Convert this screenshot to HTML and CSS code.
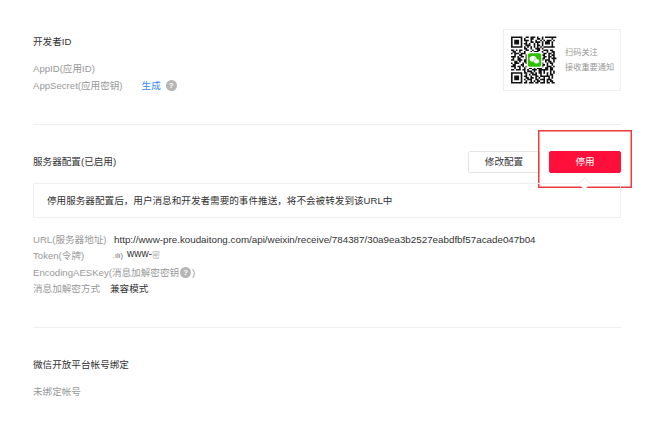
FILE: index.html
```
<!DOCTYPE html>
<html lang="zh-CN">
<head>
<meta charset="utf-8">
<title>开发者配置</title>
<link rel="stylesheet" href="styles.css">
</head>
<body>
<main class="page">
  <section class="section dev">
    <div class="dev-info">
      <h2 class="title">开发者ID</h2>
      <p class="row first"><span class="label">AppID(应用ID)</span></p>
      <p class="row"><span class="label">AppSecret(应用密钥)</span><a class="link" href="#">生成</a><span class="help">?</span></p>
    </div>
    <aside class="qr-card">
      <svg class="qr" viewBox="0 0 29 29" aria-hidden="true">
        <path fill="none" stroke="#111" stroke-width="1" d="M0 .5h7m2 0h2m1 0h3m1 0h1m2 0h1m1 0h7M0 1.5h1m5 0h1m1 0h1m3 0h2m2 0h2m1 0h1m5 0h1M0 2.5h1m1 0h3m1 0h1m1 0h3m1 0h1m2 0h1m2 0h1m1 0h1m1 0h3m1 0h1M0 3.5h1m1 0h3m1 0h1m2 0h1m2 0h2m1 0h3m1 0h1m1 0h3m1 0h1M0 4.5h1m1 0h3m1 0h1m1 0h2m1 0h1m2 0h1m1 0h1m2 0h1m1 0h3m1 0h1M0 5.5h1m5 0h1m2 0h3m2 0h1m1 0h2m1 0h1m5 0h1M0 6.5h7m1 0h1m1 0h1m1 0h1m1 0h1m1 0h1m1 0h1m1 0h7M8 7.5h2m2 0h1m2 0h3m1 0h1M0 8.5h2m1 0h1m1 0h2m2 0h2m2 0h1m2 0h2m2 0h3m1 0h2M1 9.5h2m2 0h1m2 0h1m3 0h1m1 0h3m2 0h1m2 0h1m2 0h2M0 10.5h1m1 0h3m1 0h3m2 0h1m3 0h1m1 0h2m1 0h2m1 0h2m1 0h1M2 11.5h1m2 0h2m2 0h1m1 0h2m5 0h3m2 0h1m1 0h2M0 12.5h3m1 0h1m1 0h2m1 0h1m8 0h1m1 0h2m1 0h2m1 0h1M1 13.5h1m2 0h2m3 0h1m8 0h3m2 0h1m1 0h3M0 14.5h2m2 0h3m1 0h2m8 0h2m1 0h3m2 0h1M2 15.5h2m1 0h1m2 0h2m8 0h1m2 0h1m1 0h2m1 0h1M0 16.5h1m1 0h3m2 0h1m1 0h2m6 0h3m2 0h1m1 0h2M1 17.5h2m3 0h2m2 0h1m1 0h3m2 0h1m1 0h2m1 0h1m2 0h1M0 18.5h3m1 0h2m1 0h1m1 0h3m1 0h1m2 0h2m1 0h1m2 0h3m1 0h1M2 19.5h1m2 0h1m2 0h1m2 0h2m1 0h1m1 0h3m2 0h2m1 0h2M0 20.5h2m1 0h3m1 0h2m1 0h1m2 0h3m1 0h6m1 0h2M8 21.5h1m1 0h3m1 0h1m2 0h2m1 0h1m3 0h1m1 0h1M0 22.5h7m1 0h2m2 0h2m1 0h1m1 0h2m1 0h1m1 0h1m1 0h1m1 0h1M0 23.5h1m5 0h1m2 0h1m1 0h1m1 0h3m2 0h1m3 0h1m1 0h2M0 24.5h1m1 0h3m1 0h1m1 0h2m2 0h1m2 0h2m1 0h6m1 0h1M0 25.5h1m1 0h3m1 0h1m2 0h2m1 0h2m1 0h1m1 0h1m2 0h1m2 0h1m1 0h1M0 26.5h1m1 0h3m1 0h1m1 0h1m1 0h3m2 0h2m1 0h3m1 0h3M0 27.5h1m5 0h1m2 0h1m2 0h1m1 0h1m1 0h2m2 0h1m1 0h1m1 0h2M0 28.5h7m1 0h2m1 0h3m1 0h2m1 0h3m1 0h2m1 0h2"/>
        <rect x="9.6" y="9.6" width="9.8" height="9.8" rx="1" fill="#fff"/>
        <rect x="10.4" y="10.4" width="8.2" height="8.2" rx="1.2" fill="#2dc100"/>
        <ellipse cx="13.6" cy="13.8" rx="2.2" ry="1.8" fill="#fff"/>
        <ellipse cx="15.7" cy="15.3" rx="1.8" ry="1.5" fill="#fff" stroke="#2dc100" stroke-width=".3"/>
      </svg>
      <div class="qr-text">
        <span>扫码关注</span>
        <span>接收重要通知</span>
      </div>
    </aside>
  </section>

  <section class="section server">
    <div class="server-head">
      <h2 class="title">服务器配置(已启用)</h2>
      <div class="actions">
        <button class="btn" type="button">修改配置</button>
        <button class="btn danger" type="button">停用</button>
      </div>
      <div class="highlight"></div>
    </div>
    <div class="notice">停用服务器配置后，用户消息和开发者需要的事件推送，将不会被转发到该URL中</div>
    <div class="rows">
      <p class="row"><span class="label wide">URL(服务器地址)</span><span class="value url">http://www-pre.koudaitong.com/api/weixin/receive/784387/30a9ea3b2527eabdfbf57acade047b04</span></p>
      <p class="row"><span class="label wide">Token(令牌)</span><span class="scrap">.ılı)</span><span class="value up">www-</span><span class="scrap-cjk">密</span></p>
      <p class="row"><span class="label">EncodingAESKey(消息加解密密钥</span><span class="help tight">?</span><span class="label">)</span></p>
      <p class="row"><span class="label mode">消息加解密方式</span><span class="value">兼容模式</span></p>
    </div>
  </section>

  <section class="section open">
    <h2 class="title">微信开放平台帐号绑定</h2>
    <p class="row unbound"><span class="label">未绑定帐号</span></p>
  </section>
</main>
</body>
</html>
```

FILE: styles.css
```
* { box-sizing: border-box; }
html, body { margin: 0; background: #fff; }
body {
  width: 650px;
  height: 445px;
  overflow: hidden;
  font-family: "Liberation Sans", "Noto Sans CJK SC", sans-serif;
  font-size: 9.6px;
  line-height: 16.5px;
  color: #333;
}
.page { padding: 29px 29px 0 33px; }
.section { border-bottom: 1px solid #eee; }
.section.open { border-bottom: 0; }
.title { margin: 0; font-size: 9.6px; font-weight: 400; line-height: 16px; color: #333; }
.row { margin: 0; display: flex; align-items: center; white-space: nowrap; }
.label { color: #999; }
.value { color: #333; }
.url { font-size: 9.8px; }

.dev { display: flex; justify-content: space-between; height: 96px; }
.dev-info { padding-top: 5px; }
.first { margin-top: 11px; }
.link { margin-left: 19px; color: #38f; text-decoration: none; }
.help {
  display: inline-block;
  width: 11px;
  height: 11px;
  margin-left: 5px;
  border-radius: 50%;
  background: #b5b5b5;
  color: #fff;
  font-size: 8px;
  font-weight: 700;
  line-height: 11px;
  text-align: center;
}
.help.tight { margin: 0 1px; }

.qr-card {
  width: 118px;
  height: 62px;
  display: flex;
  align-items: center;
  gap: 7px;
  padding-left: 7px;
  border: 1px solid #eee;
}
.qr { width: 47px; height: 48px; flex: none; }
.qr-text { display: flex; flex-direction: column; gap: 6px; font-size: 8.2px; line-height: 9px; color: #999; white-space: nowrap; }
.qr-text span { display: block; }

.server { height: 203px; padding-top: 26px; }
.server-head { position: relative; display: flex; justify-content: space-between; align-items: center; height: 22px; }
.actions { display: flex; gap: 9px; }
.btn {
  width: 72px;
  height: 22px;
  padding: 0;
  border: 1px solid #e5e5e5;
  border-radius: 2px;
  background: #fff;
  color: #333;
  font: inherit;
  line-height: 20px;
}
.btn.danger { border-color: #ff0f3a; background: #ff0f3a; color: #fff; }
.highlight {
  position: absolute;
  left: 505px;
  top: -21px;
  width: 94px;
  height: 58px;
  border: 1px solid #ee3a3f;
  box-shadow: inset 0 0 0 .5px #ee3a3f;
}
.notice {
  position: relative;
  margin-top: 10px;
  height: 35px;
  padding-left: 13px;
  border: 1px solid #eee;
  line-height: 33px;
  color: #333;
}
.notice::before {
  content: "";
  position: absolute;
  right: 31px;
  top: -5px;
  width: 8px;
  height: 8px;
  background: #fff;
  border-left: 1px solid #eee;
  border-top: 1px solid #eee;
  transform: rotate(45deg);
}
.rows { margin-top: 13.5px; }
.wide { width: 81px; }
.scrap { margin-left: -1px; width: 14px; font-size: 7px; color: #666; }
.up { position: relative; top: -2px; font-size: 10px; }
.scrap-cjk { font-size: 8px; color: #aaa; }
.mode { width: 77px; }

.open { padding-top: 29px; }
.unbound { margin-top: 11px; }
```
